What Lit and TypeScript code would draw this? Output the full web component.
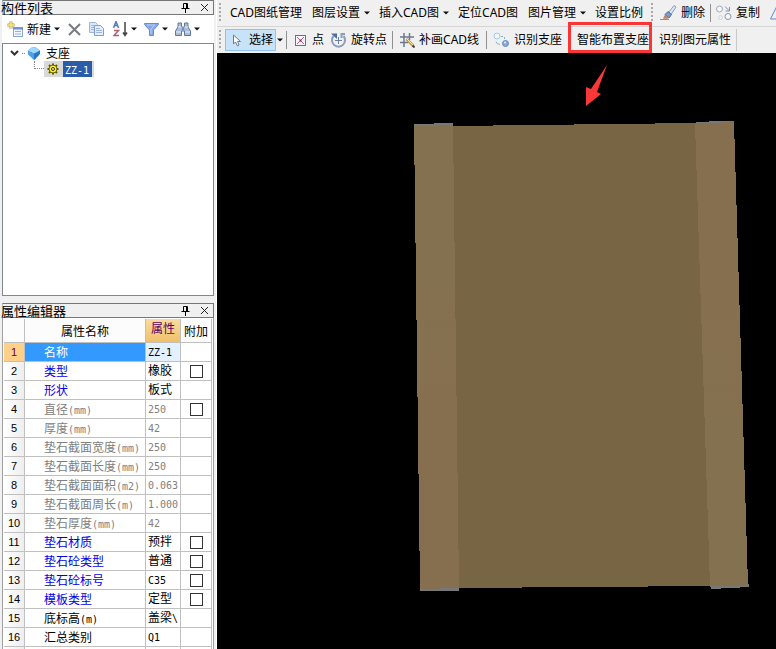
import { LitElement, html, css, svg, nothing } from "lit";
import { customElement } from "lit/decorators.js";
import { classMap } from "lit/directives/class-map.js";

type Row = { name: string; value: string; kind: "main" | "dim" | "plain"; extra?: boolean };

const ROWS: Row[] = [
  { name: "名称", value: "ZZ-1", kind: "main" },
  { name: "类型", value: "橡胶", kind: "main", extra: true },
  { name: "形状", value: "板式", kind: "main" },
  { name: "直径(mm)", value: "250", kind: "dim", extra: true },
  { name: "厚度(mm)", value: "42", kind: "dim" },
  { name: "垫石截面宽度(mm)", value: "250", kind: "dim" },
  { name: "垫石截面长度(mm)", value: "250", kind: "dim" },
  { name: "垫石截面面积(m2)", value: "0.063", kind: "dim" },
  { name: "垫石截面周长(m)", value: "1.000", kind: "dim" },
  { name: "垫石厚度(mm)", value: "42", kind: "dim" },
  { name: "垫石材质", value: "预拌", kind: "main", extra: true },
  { name: "垫石砼类型", value: "普通", kind: "main", extra: true },
  { name: "垫石砼标号", value: "C35", kind: "main", extra: true },
  { name: "模板类型", value: "定型", kind: "main", extra: true },
  { name: "底标高(m)", value: "盖梁\\", kind: "plain" },
  { name: "汇总类别", value: "Q1", kind: "plain" },
];

// Latin runs are set in a half-width face next to the full-width characters.
const mixed = (text: string) =>
  text
    .split(/([\x21-\x7e]+)/)
    .filter(Boolean)
    .map((part) => (/^[\x21-\x7e]/.test(part) ? html`<span class="half">${part}</span>` : part));

const icon = (w: number, h: number, body: unknown) =>
  html`<svg class="icon" width=${w} height=${h} viewBox="0 0 ${w} ${h}" aria-hidden="true">${body}</svg>`;

const caret = () => icon(6, 4, svg`<path d="M0 0.5h6L3 3.5z" fill="#111"/>`);

const icons = {
  pin: () => icon(9, 10, svg`<path d="M2.500 0.500h4v5h-4zM0.500 5.500h8M4.500 6v4" fill="none" stroke="#000"/><path d="M5.500 0v6" stroke="#000"/>`),
  close: () => icon(9, 9, svg`<path d="M1 1l7 7M8 1l-7 7" stroke="#222" fill="none"/>`),
  create: () =>
    icon(17, 17, svg`<rect x="6.500" y="6.500" width="9" height="9" fill="#f3f7fd" stroke="#8ba6d2"/><path d="M6 7.500h10" stroke="#6c8fd0" stroke-width="2"/><path d="M8 10.500h6M8 13h6" stroke="#9bb2d8"/><path d="M4 0.500v7M0.500 4h7" stroke="#b8a050" stroke-width="3"/><path d="M4 1v6M1 4h6" stroke="#ffe680" stroke-width="1.500"/>`),
  remove: () => icon(13, 13, svg`<path d="M1 1l11 11M12 1L1 12" stroke="#777b80" stroke-width="2" fill="none"/>`),
  copy: () =>
    icon(16, 14, svg`<path d="M0.500 0.500h6l2 2v8h-8z" fill="#dce7f8" stroke="#9ab4dc"/><path d="M5.500 3.500h6l3 3v7h-9z" fill="#e4eefc" stroke="#7d9ed2"/><path d="M2 3.500h4M2 5.500h3M2 7.500h3M7 6.500h4M7 8.500h6M7 10.500h6" stroke="#9db8e4"/>`),
  sort: () =>
    icon(15, 16, svg`<path d="M0.500 7L3 0.500 5.500 7M1.500 4.500h3" fill="none" stroke="#5678b8" stroke-width="1.500"/><path d="M1 9.500h4.500L1 14.500h5" fill="none" stroke="#a86570" stroke-width="1.500"/><path d="M12 1v13M10 11.500l2 3 2-3" fill="none" stroke="#444" stroke-width="1.500"/>`),
  filter: () =>
    icon(15, 13, svg`<path d="M0.500 0.500h14v1L9.500 7v5.500h-4V7l-5-5.500z" fill="#88a9e6" stroke="#6c8cc8"/><path d="M3 2h8L7 6v5" fill="none" stroke="#b9cef5"/>`),
  find: () =>
    icon(16, 14, svg`<path d="M3 1h3.500v4h3V1H13v4l2.500 4v4.500h-6V9h-3v4.500h-6V9L3 5z" fill="#a9bcd8" stroke="#5e799f"/><path d="M3 5h3.500M9.500 5H13M1 10h5M10 10h5" stroke="#edf3fb"/><path d="M7 7h2" stroke="#45628f"/>`),
  chevron: () => icon(9, 6, svg`<path d="M1 1l3.500 3.500L8 1" fill="none" stroke="#333" stroke-width="2"/>`),
  gem: () =>
    icon(12, 13, svg`<path d="M2.500 1L7 0l5 3.500v3.500L6.500 13 0 7V4z" fill="#2878c8"/><path d="M2.500 1L7 0l5 3.500-6 3L0 4z" fill="#a2d8fb"/><path d="M0 4l6 2.500V13L0 7z" fill="#4ba2e6"/>`),
  gear: () =>
    icon(12, 12, svg`<path d="M6 0.500v11M0.500 6h11M2 2l8 8M10 2l-8 8" stroke="#5c5500" stroke-width="2"/><circle cx="6" cy="6" r="4" fill="#ffee18" stroke="#6b6300"/><circle cx="6" cy="6" r="1.500" fill="#fff9a0" stroke="#333"/>`),
  pointer: () => icon(9, 13, svg`<path d="M1.500 1v9l2-2 2 4 1.500-1-1.500-3.500h3z" fill="#fff" stroke="#6e7c95"/>`),
  point: () =>
    icon(11, 11, svg`<rect x="0.500" y="0.500" width="10" height="10" fill="#f2f5ff" stroke="#5c70a8"/><path d="M2 2l7 7M9 2l-7 7" stroke="#c06070"/><circle cx="5.500" cy="5.500" r="1" fill="#7a2850"/>`),
  rotate: () =>
    icon(17, 16, svg`<path d="M3.500 4A6.500 6.500 0 1 0 13.500 4" fill="none" stroke="#8a9dbb" stroke-width="2"/><path d="M1 1.500h6v5.500z" fill="#4f6ca0"/><path d="M10.500 1H15v2h-2.500v3h-2z" fill="#8a9dbb"/><path d="M5 8.500h7M8.500 5v7" stroke="#6b7f9f"/>`),
  patch: () =>
    icon(15, 15, svg`<path d="M4 0v14M9.500 0v7M0 4h14M0 9.500h8" stroke="#6b7893" stroke-width="1.500"/><path d="M6.500 6l7 7" stroke="#c09a54" stroke-width="3"/><path d="M7 6l6 6" stroke="#ffe6a4"/><path d="M12.500 12.500l2 2" stroke="#444" stroke-width="2"/>`),
  recognize: () =>
    icon(17, 16, svg`<circle cx="4" cy="4" r="3" fill="#eef8fc" stroke="#a5cbdc"/><circle cx="12.500" cy="11.500" r="3" fill="#8ba5d4" stroke="#6f8abb"/><circle cx="12" cy="10.500" r="1" fill="#e6eeff"/><path d="M8 4.500h2M11.500 5v2M3 9.500l1 2 3 1" stroke="#7db7d0" fill="none"/>`),
  brush: () =>
    icon(17, 16, svg`<path d="M14 0.500l2 1.500-5 7.500-2.500-2z" fill="#dce6f4" stroke="#8a9bb8"/><path d="M8 6.500l3.500 3-2.500 3.500-4-3.500z" fill="#7d9bd0" stroke="#4d6792"/><path d="M5 9.500l4 3.500c-2 1-4 1-6 0.500z" fill="#c08468"/><path d="M0 14.500h9" stroke="#87929f"/>`),
  duplicate: () =>
    icon(16, 16, svg`<circle cx="3.500" cy="4" r="3" fill="#f5f7fa" stroke="#a0a9b5"/><circle cx="12" cy="11.500" r="3" fill="#f5f7fa" stroke="#8c97a6"/><circle cx="4.500" cy="12.500" r="2" fill="none" stroke="#d0d4da"/><path d="M9 1.500l4 4M13.500 2v4h-4" fill="none" stroke="#7b93ba"/>`),
  mirror: () => icon(14, 14, svg`<path d="M6.500 1v12H0.500z" fill="#eaf1fc" stroke="#6686c0"/><path d="M9.500 1v12h4z" fill="none" stroke="#6686c0"/>`),
};

@customElement("app-root")
export class AppRoot extends LitElement {
  static styles = css`
    :host {
      display: flex;
      height: 100vh;
      overflow: hidden;
      background: #f0f0f0;
      color: #000;
      font: 12px/18px "Noto Sans CJK SC", sans-serif;
    }
    * { box-sizing: border-box; }
    button {
      font: inherit;
      color: inherit;
      border: 0;
      background: none;
      padding: 0;
      margin: 0;
      display: flex;
      align-items: center;
      white-space: nowrap;
      flex: none;
    }
    .icon { display: block; flex: none; }
    .half { font: 10px/10px "DejaVu Sans Mono", monospace; }

    .side {
      flex: none;
      width: 217px;
      display: flex;
      flex-direction: column;
      padding: 0 2px;
      border-right: 1px solid #fff;
    }
    .title {
      flex: none;
      display: flex;
      align-items: center;
      gap: 10px;
      height: 15px;
      padding-right: 4px;
      border: 1px solid #777;
      border-left-color: #bbb;
    }
    .title h2 { flex: 1; margin: 0 0 0 -2px; font: 13px/13px "Noto Sans CJK SC", sans-serif; white-space: nowrap; }
    .tools { flex: none; display: flex; align-items: center; height: 28px; padding-left: 5px; background: #fff; }
    .tools button { gap: 3px; margin-right: 8px; }
    .tools .split { margin-right: 7px; }
    .tree { flex: none; height: 253px; border: 1px solid #828790; background: #fff; padding: 1px 0 0 7px; line-height: 16px; }
    .tree ul { margin: 0; padding: 0; list-style: none; }
    .node { display: flex; align-items: center; height: 16px; }
    .node .dots { width: 3px; margin: 0 3px; border-top: 1px dotted #888; }
    .node .label { margin-left: 6px; }
    .branch { display: flex; height: 16px; padding-left: 24px; }
    .branch .elbow { width: 10px; height: 8px; border: dotted #888; border-width: 0 0 1px 1px; }
    .picked { display: flex; align-items: center; gap: 4px; background: #d9d9d9; padding: 0 2px; }
    .picked .name { background: #2b5caa; color: #fff; padding: 0 3px 0 2px; }
    .picked .icon { margin-left: 1px; }
    .second { margin-top: 7px; }

    .grid { flex: 1; min-height: 0; overflow: hidden; border: 1px solid #a0a0a0; border-width: 0 1px; padding: 1px 1px 0; background: #fff; }
    table { width: 100%; border-collapse: separate; border-spacing: 0; table-layout: fixed; }
    th, td { padding: 0; height: 19px; line-height: 18px; font-weight: 400; text-align: left; border: solid #c0c0c0; border-width: 0 1px 1px 0; white-space: nowrap; }
    thead th { height: 24px; text-align: center; background: #fcfcfc; }
    thead .active { background: linear-gradient(#f9dca0, #f0c068); color: #600060; padding-bottom: 5px; }
    .c-num { width: 21px; }
    .c-value { width: 35px; }
    .c-extra { width: 31px; }
    tbody th { font: 11px/18px "Liberation Sans", sans-serif; text-align: center; background: linear-gradient(90deg, #fff, #eee); }
    tbody .name { padding-left: 19px; }
    tbody .value { padding: 0 0 2px 2px; line-height: 16px; }
    tr.main .name { color: #0000e8; }
    tr.dim td { color: #808080; }
    tbody tr.current th { background: #ffd08a; color: #600040; }
    tr.current .name { background: #3399ff; color: #fff; }
    tr.current .value { background: #e2f0ff; }
    .extra input { appearance: none; display: block; width: 13px; height: 13px; margin: 0 auto; border: 1px solid #333; background: #fff; }

    .work { flex: 1; min-width: 0; display: flex; flex-direction: column; background: #000; }
    .bar { flex: none; display: flex; align-items: center; height: 26px; background: #f0f0f0; font-family: "Noto Sans", "Noto Sans CJK SC", sans-serif; }
    .bar + .bar { height: 27px; border-top: 1px solid #d5d5d5; }
    .handle { flex: none; width: 2px; height: 20px; margin: 0 4px 0 2px; background: repeating-linear-gradient(#aaa 0 2px, #f0f0f0 2px 4px); }
    .bar button { padding: 0 5px; gap: 4px; height: 22px; }
    .bar button.drop { padding-right: 4px; }
    .bar .handle.inner { margin: 0 2px 0 3px; }
    .bar .mode { background: #c8e2f8; border: 1px solid #90c4f0; padding: 0 2px 0 6px; gap: 8px; }
    .bar .more { padding: 0 3px 0 1px; }
    .rule { flex: none; width: 1px; height: 18px; background: #909090; }
    .bar .point { padding: 0 1px 0 8px; gap: 6px; }
    .bar .wide { padding: 0 7px; }
    .bar .recognize { padding-left: 6px; }
    .bar .marked { position: relative; padding: 0 5px 0 10px; }
    .marked::after { content: ""; position: absolute; z-index: 1; inset: -7px 2px -2px 1px; border: 3px solid #fb3434; }
    .ending { border-right: 1px solid #c8c8c8; }
    .view { flex: 1; min-height: 0; width: 100%; display: block; }
  `;

  render() {
    return html`
      <aside class="side">
        ${this.heading("构件列表", false)}
        <div class="tools">
          <button>${icons.create()}<span>新建</span>${caret()}</button>
          <button aria-label="删除构件">${icons.remove()}</button>
          <button aria-label="复制构件">${icons.copy()}</button>
          <button class="split" aria-label="排序">${icons.sort()}${caret()}</button>
          <button class="split" aria-label="过滤">${icons.filter()}${caret()}</button>
          <button class="split" aria-label="查找">${icons.find()}${caret()}</button>
        </div>
        <div class="tree">
          <ul>
            <li>
              <div class="node">${icons.chevron()}<span class="dots"></span>${icons.gem()}<span class="label">支座</span></div>
              <ul>
                <li class="branch">
                  <span class="elbow"></span>
                  <span class="picked">${icons.gear()}<span class="name">${mixed("ZZ-1")}</span></span>
                </li>
              </ul>
            </li>
          </ul>
        </div>
        ${this.heading("属性编辑器", true)}
        <div class="grid">${this.table()}</div>
      </aside>
      <main class="work">
        <div class="bar">
          <span class="handle"></span>
          <button>CAD图纸管理</button>
          <button class="drop">图层设置${caret()}</button>
          <button class="drop">插入CAD图${caret()}</button>
          <button>定位CAD图</button>
          <button class="drop">图片管理${caret()}</button>
          <button>设置比例</button>
          <span class="handle inner"></span>
          <button>${icons.brush()}删除</button>
          <span class="rule"></span>
          <button>${icons.duplicate()}复制</button>
          <button aria-label="镜像">${icons.mirror()}</button>
        </div>
        <div class="bar">
          <span class="handle"></span>
          <button class="mode">${icons.pointer()}选择</button>
          <button class="more" aria-label="选择方式">${caret()}</button>
          <span class="rule"></span>
          <button class="point">${icons.point()}点</button>
          <button>${icons.rotate()}旋转点</button>
          <span class="rule"></span>
          <button class="wide">${icons.patch()}补画CAD线</button>
          <span class="rule"></span>
          <button class="recognize">${icons.recognize()}识别支座</button>
          <button class="marked">智能布置支座</button>
          <button class="ending">识别图元属性</button>
        </div>
        ${this.scene()}
      </main>
    `;
  }

  private heading(text: string, second: boolean) {
    return html`<div class=${classMap({ title: true, second })}>
      <h2>${text}</h2>
      <button aria-label="固定">${icons.pin()}</button>
      <button aria-label="关闭">${icons.close()}</button>
    </div>`;
  }

  private table() {
    return html`<table>
      <colgroup><col class="c-num" /><col /><col class="c-value" /><col class="c-extra" /></colgroup>
      <thead>
        <tr><th></th><th>属性名称</th><th class="active">属性</th><th>附加</th></tr>
      </thead>
      <tbody>
        ${ROWS.map(
          (row, i) => html`<tr class=${classMap({ [row.kind]: true, current: i === 0 })}>
            <th scope="row">${i + 1}</th>
            <td class="name">${mixed(row.name)}</td>
            <td class="value">${mixed(row.value)}</td>
            <td class="extra">${row.extra ? html`<input type="checkbox" aria-label="附加 ${row.name}" />` : nothing}</td>
          </tr>`
        )}
        <tr><th></th><td></td><td></td><td></td></tr>
      </tbody>
    </table>`;
  }

  private scene() {
    return html`<svg class="view" viewBox="217 53 559 596" preserveAspectRatio="xMinYMin meet" role="img" aria-label="支座模型">
      <defs>
        <linearGradient id="left" x1="0" y1="0" x2="0" y2="1">
          <stop offset="0.35" stop-color="#84714f" /><stop offset="0.65" stop-color="#866f4f" />
        </linearGradient>
        <linearGradient id="right" x1="0" y1="0" x2="0" y2="1">
          <stop offset="0.35" stop-color="#866f4f" /><stop offset="0.65" stop-color="#84714f" />
        </linearGradient>
      </defs>
      <g shape-rendering="crispEdges">
        <path d="M453 126L696 123L711 586L459 588z" fill="#786544" />
        <path d="M414 124L453 123V128H414zM696 122L734 120.500V126H696zM420 586H459V591H420zM710 585L749 584V587L711 589z" fill="#777" />
        <path d="M414 126L453 125L459 588L420 589z" fill="url(#left)" />
        <path d="M695 123.500L734 122L748 585.500L710 586.500z" fill="url(#right)" />
      </g>
      <path d="M607 65L597 92L601 94L586 106V87L591 89z" fill="#fb3838" />
    </svg>`;
  }
}
